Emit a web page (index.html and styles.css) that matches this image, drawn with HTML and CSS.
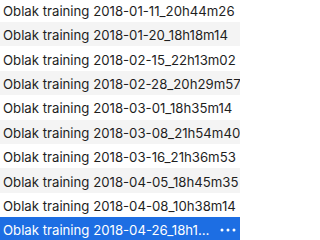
FILE: index.html
```html
<!DOCTYPE html>
<html>
<head>
<meta charset="utf-8">
<link rel="stylesheet" href="styles.css">
</head>
<body>
<div class="list">
  <div class="row"><span class="name">Oblak training 2018-01-11_20h44m26</span></div>
  <div class="row alt"><span class="name">Oblak training 2018-01-20_18h18m14</span></div>
  <div class="row"><span class="name">Oblak training 2018-02-15_22h13m02</span></div>
  <div class="row alt"><span class="name">Oblak training 2018-02-28_20h29m57</span></div>
  <div class="row"><span class="name">Oblak training 2018-03-01_18h35m14</span></div>
  <div class="row alt"><span class="name">Oblak training 2018-03-08_21h54m40</span></div>
  <div class="row"><span class="name">Oblak training 2018-03-16_21h36m53</span></div>
  <div class="row alt"><span class="name">Oblak training 2018-04-05_18h45m35</span></div>
  <div class="row"><span class="name">Oblak training 2018-04-08_10h38m14</span></div>
  <div class="row selected">
    <span class="name trunc">Oblak training 2018-04-26_18h13m21</span>
    <svg class="more" width="16" height="4" viewBox="0 0 16 4"><circle cx="2" cy="2" r="1.5"/><circle cx="8" cy="2" r="1.5"/><circle cx="14" cy="2" r="1.5"/></svg>
  </div>
</div>
</body>
</html>
```
FILE: styles.css
```css
html, body {
  margin: 0;
  padding: 0;
  background: #ffffff;
  overflow: hidden;
}
.list {
  display: flex;
  flex-direction: column;
  width: 240px;
  margin-top: -2.4px;
  font-family: Inter, "Noto Sans", sans-serif;
  font-size: 13.2px;
  color: #1e1e1e;
}
.row {
  height: 24.4px;
  box-sizing: border-box;
  display: flex;
  align-items: center;
  padding: 2px 0 0 3px;
  background: #ffffff;
}
.row.alt {
  background: #f4f4f4;
}
.row.selected {
  background: #1d6ee3;
  color: #ffffff;
  padding-right: 4px;
}
.name {
  flex: 1;
  min-width: 0;
  white-space: nowrap;
  overflow: hidden;
}
.name.trunc {
  text-overflow: ellipsis;
}
.more {
  flex: none;
  margin-left: 9px;
  fill: #ffffff;
}
```
